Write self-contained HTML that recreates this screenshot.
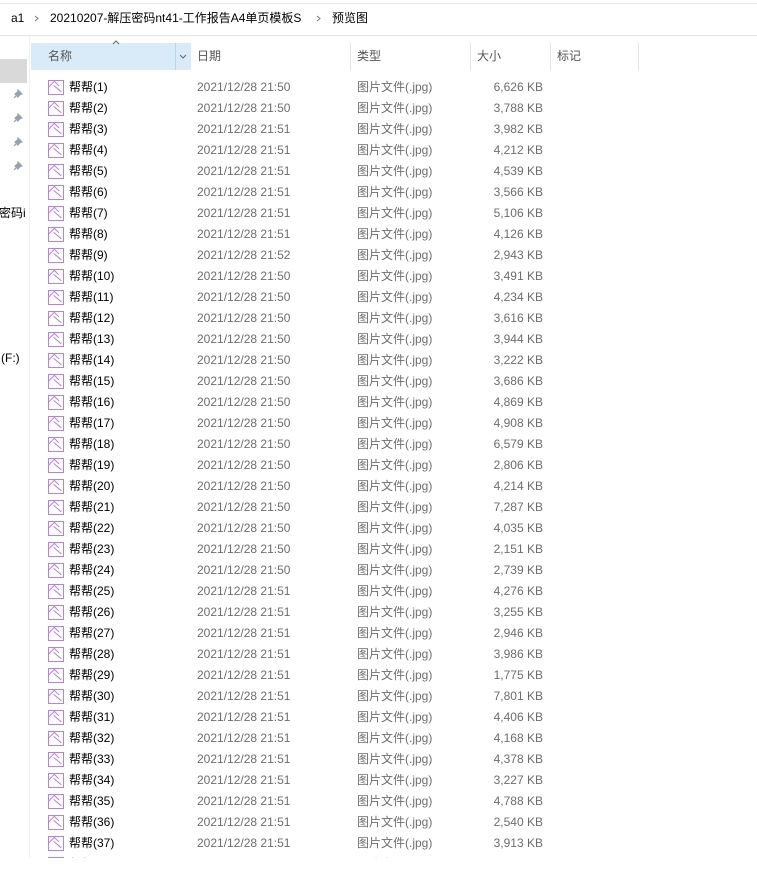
<!DOCTYPE html>
<html><head><meta charset="utf-8"><style>
body{margin:0;width:757px;height:877px;background:#fff;position:relative;overflow:hidden;font-family:"Liberation Sans","Noto Sans CJK SC",sans-serif;font-size:12px}
.a{position:absolute;white-space:nowrap;line-height:16px}
.r{position:absolute;left:0;width:757px;height:21px}
.r span{position:absolute;top:2px;line-height:16px;height:16px;white-space:nowrap}
.r .ic{position:absolute;left:48px;top:3px;width:14px;height:13px;border:1px solid #b77ef0;overflow:hidden}
.r .n{left:69px;color:#000}
.r .d{left:197px;color:#6d6d6d}
.r .t{left:357px;color:#6d6d6d}
.r .s{right:214px;color:#6d6d6d}
.hd{position:absolute;top:48px;line-height:16px;color:#555;font-size:12px}
.sep{position:absolute;top:43px;width:1px;height:27px;background:#e5e5e5}
.pin{position:absolute;left:13px}
.r .ic::after{content:"";position:absolute;left:-1px;top:6px;width:8px;height:6px;border-top:1px solid #b77ef0;border-right:1px solid #b77ef0;transform:rotate(-45deg);transform-origin:0 0}
.r .ic::before{content:"";position:absolute;left:5px;top:4px;width:10px;height:1px;background:#b77ef0;transform:rotate(40deg);transform-origin:0 0}
</style></head><body>
<div class="a" style="left:0;top:3px;width:757px;height:1px;background:#e8e8e8"></div>
<div class="a" style="left:11px;top:10px;color:#000">a1</div>
<svg class="a" style="left:34px;top:15px" width="5" height="7"><path d="M1 1L4 3.5L1 6" stroke="#777" fill="none"/></svg>
<div class="a" style="left:50px;top:10px;color:#000">20210207-解压密码nt41-工作报告A4单页模板S</div>
<svg class="a" style="left:316px;top:15px" width="5" height="7"><path d="M1 1L4 3.5L1 6" stroke="#777" fill="none"/></svg>
<div class="a" style="left:332px;top:10px;color:#000">预览图</div>
<div class="a" style="left:0;top:35px;width:757px;height:1px;background:#e5e5e5"></div>
<div class="a" style="left:0;top:59px;width:27px;height:24px;background:#d9d9d9"></div>
<svg class="pin" style="top:89px" width="10" height="10"><path d="M5 1L9 5L7 5.5L5 8L2 5L4.5 3Z M3.5 6.5L1 9" stroke="#9aa3ab" fill="#9aa3ab" stroke-width="1.2"/></svg>
<svg class="pin" style="top:113px" width="10" height="10"><path d="M5 1L9 5L7 5.5L5 8L2 5L4.5 3Z M3.5 6.5L1 9" stroke="#9aa3ab" fill="#9aa3ab" stroke-width="1.2"/></svg>
<svg class="pin" style="top:137px" width="10" height="10"><path d="M5 1L9 5L7 5.5L5 8L2 5L4.5 3Z M3.5 6.5L1 9" stroke="#9aa3ab" fill="#9aa3ab" stroke-width="1.2"/></svg>
<svg class="pin" style="top:161px" width="10" height="10"><path d="M5 1L9 5L7 5.5L5 8L2 5L4.5 3Z M3.5 6.5L1 9" stroke="#9aa3ab" fill="#9aa3ab" stroke-width="1.2"/></svg>
<div class="a" style="left:-1px;top:205px;color:#000">密码i</div>
<div class="a" style="left:1px;top:350px;color:#000">(F:)</div>
<div class="a" style="left:29px;top:36px;width:1px;height:822px;background:#f0f0f0"></div>
<div class="a" style="left:31px;top:43px;width:160px;height:27px;background:#d9ebf9"></div>
<div class="a" style="left:175px;top:43px;width:1px;height:27px;background:#bcd4ea"></div>
<svg class="a" style="left:112px;top:40px" width="8" height="5"><path d="M1 4L4 1L7 4" stroke="#666" fill="none"/></svg>
<svg class="a" style="left:179px;top:54px" width="8" height="5"><path d="M1 1L4 4L7 1" stroke="#666" fill="none"/></svg>
<div class="hd" style="left:48px">名称</div>
<div class="hd" style="left:197px">日期</div>
<div class="sep" style="left:350px"></div>
<div class="hd" style="left:357px">类型</div>
<div class="sep" style="left:470px"></div>
<div class="hd" style="left:477px">大小</div>
<div class="sep" style="left:550px"></div>
<div class="hd" style="left:557px">标记</div>
<div class="sep" style="left:638px"></div>
<div style="position:absolute;left:0;top:0;width:757px;height:858px;overflow:hidden">
<div class="r" style="top:77px"><div class="ic"></div><span class="n">帮帮(1)</span><span class="d">2021/12/28 21:50</span><span class="t">图片文件(.jpg)</span><span class="s">6,626 KB</span></div>
<div class="r" style="top:98px"><div class="ic"></div><span class="n">帮帮(2)</span><span class="d">2021/12/28 21:50</span><span class="t">图片文件(.jpg)</span><span class="s">3,788 KB</span></div>
<div class="r" style="top:119px"><div class="ic"></div><span class="n">帮帮(3)</span><span class="d">2021/12/28 21:51</span><span class="t">图片文件(.jpg)</span><span class="s">3,982 KB</span></div>
<div class="r" style="top:140px"><div class="ic"></div><span class="n">帮帮(4)</span><span class="d">2021/12/28 21:51</span><span class="t">图片文件(.jpg)</span><span class="s">4,212 KB</span></div>
<div class="r" style="top:161px"><div class="ic"></div><span class="n">帮帮(5)</span><span class="d">2021/12/28 21:51</span><span class="t">图片文件(.jpg)</span><span class="s">4,539 KB</span></div>
<div class="r" style="top:182px"><div class="ic"></div><span class="n">帮帮(6)</span><span class="d">2021/12/28 21:51</span><span class="t">图片文件(.jpg)</span><span class="s">3,566 KB</span></div>
<div class="r" style="top:203px"><div class="ic"></div><span class="n">帮帮(7)</span><span class="d">2021/12/28 21:51</span><span class="t">图片文件(.jpg)</span><span class="s">5,106 KB</span></div>
<div class="r" style="top:224px"><div class="ic"></div><span class="n">帮帮(8)</span><span class="d">2021/12/28 21:51</span><span class="t">图片文件(.jpg)</span><span class="s">4,126 KB</span></div>
<div class="r" style="top:245px"><div class="ic"></div><span class="n">帮帮(9)</span><span class="d">2021/12/28 21:52</span><span class="t">图片文件(.jpg)</span><span class="s">2,943 KB</span></div>
<div class="r" style="top:266px"><div class="ic"></div><span class="n">帮帮(10)</span><span class="d">2021/12/28 21:50</span><span class="t">图片文件(.jpg)</span><span class="s">3,491 KB</span></div>
<div class="r" style="top:287px"><div class="ic"></div><span class="n">帮帮(11)</span><span class="d">2021/12/28 21:50</span><span class="t">图片文件(.jpg)</span><span class="s">4,234 KB</span></div>
<div class="r" style="top:308px"><div class="ic"></div><span class="n">帮帮(12)</span><span class="d">2021/12/28 21:50</span><span class="t">图片文件(.jpg)</span><span class="s">3,616 KB</span></div>
<div class="r" style="top:329px"><div class="ic"></div><span class="n">帮帮(13)</span><span class="d">2021/12/28 21:50</span><span class="t">图片文件(.jpg)</span><span class="s">3,944 KB</span></div>
<div class="r" style="top:350px"><div class="ic"></div><span class="n">帮帮(14)</span><span class="d">2021/12/28 21:50</span><span class="t">图片文件(.jpg)</span><span class="s">3,222 KB</span></div>
<div class="r" style="top:371px"><div class="ic"></div><span class="n">帮帮(15)</span><span class="d">2021/12/28 21:50</span><span class="t">图片文件(.jpg)</span><span class="s">3,686 KB</span></div>
<div class="r" style="top:392px"><div class="ic"></div><span class="n">帮帮(16)</span><span class="d">2021/12/28 21:50</span><span class="t">图片文件(.jpg)</span><span class="s">4,869 KB</span></div>
<div class="r" style="top:413px"><div class="ic"></div><span class="n">帮帮(17)</span><span class="d">2021/12/28 21:50</span><span class="t">图片文件(.jpg)</span><span class="s">4,908 KB</span></div>
<div class="r" style="top:434px"><div class="ic"></div><span class="n">帮帮(18)</span><span class="d">2021/12/28 21:50</span><span class="t">图片文件(.jpg)</span><span class="s">6,579 KB</span></div>
<div class="r" style="top:455px"><div class="ic"></div><span class="n">帮帮(19)</span><span class="d">2021/12/28 21:50</span><span class="t">图片文件(.jpg)</span><span class="s">2,806 KB</span></div>
<div class="r" style="top:476px"><div class="ic"></div><span class="n">帮帮(20)</span><span class="d">2021/12/28 21:50</span><span class="t">图片文件(.jpg)</span><span class="s">4,214 KB</span></div>
<div class="r" style="top:497px"><div class="ic"></div><span class="n">帮帮(21)</span><span class="d">2021/12/28 21:50</span><span class="t">图片文件(.jpg)</span><span class="s">7,287 KB</span></div>
<div class="r" style="top:518px"><div class="ic"></div><span class="n">帮帮(22)</span><span class="d">2021/12/28 21:50</span><span class="t">图片文件(.jpg)</span><span class="s">4,035 KB</span></div>
<div class="r" style="top:539px"><div class="ic"></div><span class="n">帮帮(23)</span><span class="d">2021/12/28 21:50</span><span class="t">图片文件(.jpg)</span><span class="s">2,151 KB</span></div>
<div class="r" style="top:560px"><div class="ic"></div><span class="n">帮帮(24)</span><span class="d">2021/12/28 21:50</span><span class="t">图片文件(.jpg)</span><span class="s">2,739 KB</span></div>
<div class="r" style="top:581px"><div class="ic"></div><span class="n">帮帮(25)</span><span class="d">2021/12/28 21:51</span><span class="t">图片文件(.jpg)</span><span class="s">4,276 KB</span></div>
<div class="r" style="top:602px"><div class="ic"></div><span class="n">帮帮(26)</span><span class="d">2021/12/28 21:51</span><span class="t">图片文件(.jpg)</span><span class="s">3,255 KB</span></div>
<div class="r" style="top:623px"><div class="ic"></div><span class="n">帮帮(27)</span><span class="d">2021/12/28 21:51</span><span class="t">图片文件(.jpg)</span><span class="s">2,946 KB</span></div>
<div class="r" style="top:644px"><div class="ic"></div><span class="n">帮帮(28)</span><span class="d">2021/12/28 21:51</span><span class="t">图片文件(.jpg)</span><span class="s">3,986 KB</span></div>
<div class="r" style="top:665px"><div class="ic"></div><span class="n">帮帮(29)</span><span class="d">2021/12/28 21:51</span><span class="t">图片文件(.jpg)</span><span class="s">1,775 KB</span></div>
<div class="r" style="top:686px"><div class="ic"></div><span class="n">帮帮(30)</span><span class="d">2021/12/28 21:51</span><span class="t">图片文件(.jpg)</span><span class="s">7,801 KB</span></div>
<div class="r" style="top:707px"><div class="ic"></div><span class="n">帮帮(31)</span><span class="d">2021/12/28 21:51</span><span class="t">图片文件(.jpg)</span><span class="s">4,406 KB</span></div>
<div class="r" style="top:728px"><div class="ic"></div><span class="n">帮帮(32)</span><span class="d">2021/12/28 21:51</span><span class="t">图片文件(.jpg)</span><span class="s">4,168 KB</span></div>
<div class="r" style="top:749px"><div class="ic"></div><span class="n">帮帮(33)</span><span class="d">2021/12/28 21:51</span><span class="t">图片文件(.jpg)</span><span class="s">4,378 KB</span></div>
<div class="r" style="top:770px"><div class="ic"></div><span class="n">帮帮(34)</span><span class="d">2021/12/28 21:51</span><span class="t">图片文件(.jpg)</span><span class="s">3,227 KB</span></div>
<div class="r" style="top:791px"><div class="ic"></div><span class="n">帮帮(35)</span><span class="d">2021/12/28 21:51</span><span class="t">图片文件(.jpg)</span><span class="s">4,788 KB</span></div>
<div class="r" style="top:812px"><div class="ic"></div><span class="n">帮帮(36)</span><span class="d">2021/12/28 21:51</span><span class="t">图片文件(.jpg)</span><span class="s">2,540 KB</span></div>
<div class="r" style="top:833px"><div class="ic"></div><span class="n">帮帮(37)</span><span class="d">2021/12/28 21:51</span><span class="t">图片文件(.jpg)</span><span class="s">3,913 KB</span></div>
<div class="r" style="top:854px"><div class="ic"></div><span class="n">帮帮(38)</span><span class="d">2021/12/28 21:51</span><span class="t">图片文件(.jpg)</span><span class="s">3,000 KB</span></div>
</div>
</body></html>
